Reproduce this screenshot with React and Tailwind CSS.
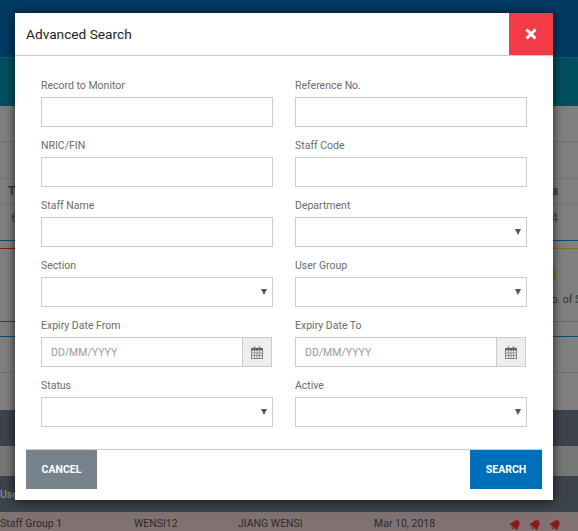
import { FaBell } from "react-icons/fa";

const fields = [
  { label: "Record to Monitor", type: "text" },
  { label: "Reference No.", type: "text" },
  { label: "NRIC/FIN", type: "text" },
  { label: "Staff Code", type: "text" },
  { label: "Staff Name", type: "text" },
  { label: "Department", type: "select" },
  { label: "Section", type: "select" },
  { label: "User Group", type: "select" },
  { label: "Expiry Date From", type: "date" },
  { label: "Expiry Date To", type: "date" },
  { label: "Status", type: "select" },
  { label: "Active", type: "select" },
];

const CalendarIcon = () => (
  <svg width="12" height="13" viewBox="0 0 12 13">
    <rect x="0.5" y="2.5" width="11" height="10" fill="#f4f4f4" stroke="#7a8288" />
    <rect x="1" y="2" width="10" height="2.5" fill="#555" />
    <rect x="2.5" y="0.5" width="2" height="3" fill="#c0705a" />
    <rect x="7.5" y="0.5" width="2" height="3" fill="#5a86b8" />
    <path d="M1 7h10M1 9.500h10M3.500 5v7M6 5v7M8.500 5v7" stroke="#8a9298" strokeWidth="1" fill="none" />
  </svg>
);

const Field = ({ label, type }) => (
  <div>
    <label className="block h-[18px] mb-[3px] pt-[1px] text-[10.5px] leading-[18px] text-[#6b6b6b]">{label}</label>
    {type === "text" && (
      <input type="text" className="block w-full h-[30px] border border-[#ccc] bg-white outline-none" />
    )}
    {type === "select" && (
      <div className="relative">
        <select className="block w-full h-[30px] border border-[#ccc] bg-white appearance-none outline-none"></select>
        {/* arrow */}
        <svg className="absolute right-[6px] top-[12px]" width="6" height="6" viewBox="0 0 6 6">
          <path d="M0 0h6L3 6z" fill="#555" />
        </svg>
      </div>
    )}
    {type === "date" && (
      <div className="flex h-[30px] w-[231px]">
        <input
          type="text"
          placeholder="DD/MM/YYYY"
          className="flex-1 min-w-0 h-full pl-[9px] border border-[#ccc] text-[10.5px] outline-none placeholder:text-[#999]"
        />
        <span className="w-[29px] h-full flex items-center justify-center bg-[#eee] border border-l-0 border-[#ccc]">
          <CalendarIcon />
        </span>
      </div>
    )}
  </div>
);

const AdvancedSearch = () => (
  <div className="absolute left-[15px] top-[13px] w-[538px] h-[487px] bg-white flex flex-col shadow-[0_1px_10px_rgba(0,0,0,0.75)]">
    {/* Header */}
    <div className="flex items-center justify-between h-[43px] border-b border-[#ccc] pl-[11px]">
      <h4 className="text-[13.7px] font-normal text-[#222]">Advanced Search</h4>
      <button className="w-[44px] h-[42px] self-start flex items-center justify-center bg-[#f23b47]">
        <svg width="12" height="12" viewBox="0 0 12 12">
          <path d="M1.500 1.500l9 9M10.500 1.500l-9 9" stroke="#fff" strokeWidth="3" fill="none" />
        </svg>
      </button>
    </div>

    {/* Form */}
    <div className="grid grid-cols-[232px_232px] gap-x-[22px] gap-y-[9px] pt-[20px] pl-[26px]">
      {fields.map((field) => (
        <Field key={field.label} label={field.label} type={field.type} />
      ))}
    </div>

    {/* Footer */}
    <div className="mt-[22px] mx-[11px] border-t border-[#ccc] flex justify-between">
      <button className="w-[71px] h-[39px] pt-[1px] bg-[#76838c] text-white text-[10.5px] font-bold">CANCEL</button>
      <button className="w-[72px] h-[39px] pt-[1px] bg-[#006fba] text-white text-[10.5px] font-bold">SEARCH</button>
    </div>
  </div>
);

const App = () => {
  return (
    <div className="relative w-[578px] h-[531px] overflow-hidden bg-[#808080] font-['Roboto',sans-serif] text-[10.5px]">
      {/* Page behind the dialog */}
      <div className="h-[57px] bg-[#003a63]"></div>
      <div className="h-[49px] bg-[#00505f] border-t border-[#0b5c69]"></div>
      <div className="h-[36px] border-b border-[#6f6f6f]"></div>
      <div className="h-[37px] border-b border-[#747474]"></div>
      <div className="h-[25px] border-b border-[#747474] flex items-center justify-between pl-[8px] pr-[20px] text-[12px] font-bold text-[#3a3a3a]">
        <span>Total</span>
        <span className="text-[#2f4050]">Data</span>
      </div>
      <div className="h-[36px] flex justify-between pl-[11px] pr-[20px] pt-[5px] text-[12px] text-[#444]">
        <span>6</span>
        <span>4</span>
      </div>
      <div className="h-[8px] border-t border-[#0f4a70]"></div>
      <div className="h-[73px] flex">
        <div className="w-1/2 border-t border-[#7d1f28]"></div>
        <div className="w-1/2 border-t border-[#8a6a20] pl-[256px] pt-[13px] whitespace-nowrap overflow-hidden">
          <div className="text-[22px] leading-[26px] text-[#8a6a20]">0</div>
          <div className="mt-[5px] -ml-[1px] text-[10.5px] leading-[14px] text-[#333]">No. of Staff</div>
        </div>
      </div>
      <div className="h-[15px] flex">
        <div className="w-1/2 border-t border-[#7d1f28]"></div>
        <div className="w-1/2 border-t border-[#8a6a20]"></div>
      </div>
      <div className="h-[36px] border-t border-[#0f4a70]"></div>
      <div className="h-[38px] border-t border-[#6f6f6f]"></div>
      <div className="h-[36px] bg-[#3d434b]"></div>
      <div className="h-[30px] bg-[#767876]"></div>
      <div className="h-[36px] bg-[#3d434b] flex items-center pt-[2px] font-medium text-[#8b9096]">User Group</div>
      <div className="h-[19px] bg-[#807272] flex items-center pt-[5px] text-[#2e2a2a]">
        <span className="w-[134px]">Staff Group 1</span>
        <span className="w-[104px]">WENSI12</span>
        <span className="w-[136px]">JIANG WENSI</span>
        <span className="w-[136px]">Mar 10, 2018</span>
        <span className="flex gap-[9px] text-[#8a1a1a]">
          <FaBell className="rotate-[40deg] text-[11px]" />
          <FaBell className="rotate-[40deg] text-[11px]" />
          <FaBell className="rotate-[40deg] text-[11px]" />
        </span>
      </div>

      <AdvancedSearch />
    </div>
  );
};

export default App;
